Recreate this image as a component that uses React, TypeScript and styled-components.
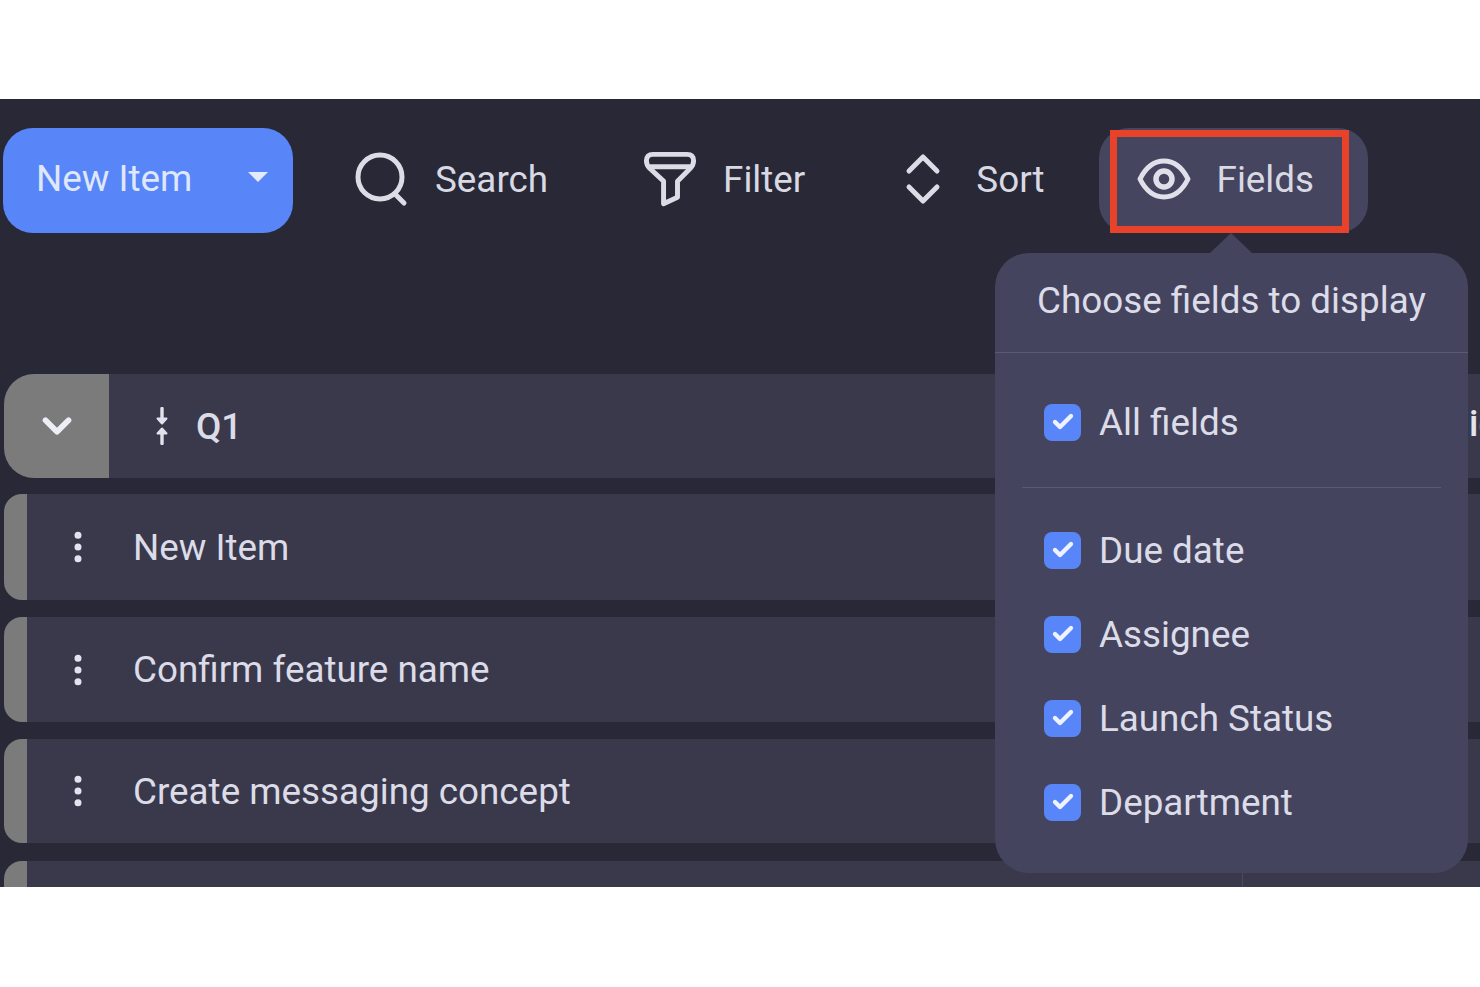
import React from 'react';
import styled, {createGlobalStyle} from 'styled-components';
import {Check, ChevronDown, MoreVertical} from 'lucide-react';

const GlobalStyle = createGlobalStyle`
  html, body {
    margin: 0;
    background: #fff;
  }
  body {
    font-family: Roboto, "Liberation Sans", sans-serif;
  }
`
const Stage = styled.main`
  position: relative;
  height: 788px;
  margin-top: 99px;
  overflow: hidden;
  background: #282836;
  color: #dcdce8;
`
const Toolbar = styled.header`
  display: flex;
  align-items: center;
  height: 105px;
  padding: 29px 0 0 3px;
`
const NewButton = styled.button`
  display: flex;
  align-items: center;
  justify-content: space-between;
  flex: none;
  box-sizing: border-box;
  width: 290px;
  height: 105px;
  padding: 0 25px 4px 33px;
  border: 0;
  border-radius: 30px;
  background: #5885f7;
  color: #dfe7fb;
  font: 36.8px Roboto, sans-serif;
`
const Caret = styled.span`
  width: 0;
  height: 0;
  margin-bottom: 4px;
  border-left: 10px solid transparent;
  border-right: 10px solid transparent;
  border-top: 10px solid #e4eafb;
`
const Tool = styled.div<{$left: number; $gap: number}>`
  display: flex;
  align-items: center;
  flex: none;
  gap: ${p => p.$gap}px;
  margin-left: ${p => p.$left}px;
  padding-bottom: 3px;
  font-size: 36.8px;
  color: #d9d9e4;
`
const FieldsTool = styled(Tool)`
  box-sizing: border-box;
  height: 105px;
  width: 269px;
  padding-left: 38px;
  border-radius: 30px;
  background: #46455f;
`
const Highlight = styled.div`
  position: absolute;
  left: 1110px;
  top: 31px;
  box-sizing: border-box;
  width: 239px;
  height: 103px;
  border: 7px solid #e8432a;
`
const Rows = styled.section`
  display: flex;
  flex-direction: column;
  margin-top: 141px;
  padding-left: 4px;
`
const Row = styled.div<{$height: number; $gap: number}>`
  display: flex;
  flex: none;
  height: ${p => p.$height}px;
  margin-bottom: ${p => p.$gap}px;
  font-size: 36.8px;
`
const Tab = styled.div<{$wide?: boolean}>`
  display: flex;
  align-items: center;
  justify-content: center;
  flex: none;
  width: ${p => (p.$wide ? 105 : 23)}px;
  border-radius: ${p => (p.$wide ? '30px 0 0 30px' : '18px 0 0 18px')};
  background: #7b7b7b;
  color: #eeeef6;
`
const RowBody = styled.div`
  display: flex;
  align-items: center;
  flex: 1;
  background: #3a394c;
`
const GroupBody = styled(RowBody)`
  gap: 26px;
  padding-left: 45px;
  font-weight: 500;
`
const Dots = styled.span`
  display: flex;
  flex: none;
  justify-content: center;
  box-sizing: border-box;
  width: 106px;
  padding-right: 4px;
  color: #e4e4f0;
`
const ClippedHead = styled.span`
  position: absolute;
  left: 1469px;
  top: 303px;
  font-size: 36.8px;
  font-weight: 500;
  color: #e4e4f0;
`
const CellLine = styled.span`
  position: absolute;
  left: 1242px;
  top: 762px;
  width: 1px;
  height: 26px;
  background: #4b4a60;
`
const Popover = styled.aside`
  position: absolute;
  left: 995px;
  top: 154px;
  width: 473px;
  height: 620px;
  border-radius: 34px;
  background: #45445f;
  &::before {
    content: '';
    position: absolute;
    right: 216px;
    top: -20px;
    border-left: 21px solid transparent;
    border-right: 21px solid transparent;
    border-bottom: 20px solid #45445f;
  }
`
const PopoverTitle = styled.h2`
  display: flex;
  align-items: center;
  box-sizing: border-box;
  height: 100px;
  margin: 0;
  padding: 0 0 4px 42px;
  border-bottom: 1px solid #5b5a75;
  font-size: 36.8px;
  font-weight: 400;
  color: #dcdce8;
`
const AllFields = styled.div`
  display: flex;
  align-items: center;
  box-sizing: border-box;
  height: 135px;
  margin: 0 27px;
  padding: 4px 0 0 22px;
  border-bottom: 1px solid #5b5a75;
`
const FieldList = styled.div`
  display: flex;
  flex-direction: column;
  gap: 48px;
  padding: 44px 0 0 49px;
`
const Field = styled.label`
  display: flex;
  align-items: center;
  gap: 18px;
  height: 36px;
  font-size: 36.8px;
  color: #dcdce8;
`
const CheckBox = styled.span`
  display: flex;
  align-items: center;
  justify-content: center;
  flex: none;
  width: 37px;
  height: 37px;
  border-radius: 8px;
  background: #5885f7;
  color: #eef2fd;
`

const SearchIcon = () => (
  <svg width="56" height="56" viewBox="0 0 56 56" fill="none" stroke="#dcdce6" strokeWidth="5" strokeLinecap="round">
    <circle cx="26" cy="26" r="22" />
    <path d="M41 43l9 9" />
  </svg>
)
const FilterIcon = () => (
  <svg width="60" height="60" viewBox="0 0 56 56" fill="none" stroke="#dcdce6" strokeWidth="4.6" strokeLinejoin="round">
    <path d="M6 11c0-4 2-6 6-6h32c4 0 6 2 6 6 0 3-1 5-3 7L35 30v15l-13 6V30L9 18c-2-2-3-4-3-7z" />
    <path d="M9 16.5h38" />
  </svg>
)
const SortIcon = () => (
  <svg width="38" height="52" viewBox="0 0 38 52" fill="none" stroke="#dcdce6" strokeWidth="5" strokeLinecap="round" strokeLinejoin="round">
    <path d="M5 18L19 4l14 14" />
    <path d="M5 34l14 14 14-14" />
  </svg>
)
const EyeIcon = () => (
  <svg width="54" height="42" viewBox="0 0 54 42" fill="none" stroke="#e0e0ea" strokeWidth="5" strokeLinejoin="round">
    <path d="M3 21C9 9 17 3 27 3s18 6 24 18c-6 12-14 18-24 18S9 33 3 21z" />
    <circle cx="27" cy="21" r="8" strokeWidth="5.5" />
  </svg>
)
const CollapseIcon = () => (
  <svg width="16" height="38" viewBox="0 0 16 38" fill="#e2e2ec" stroke="#e2e2ec" strokeWidth="3.4" strokeLinecap="round" strokeLinejoin="round">
    <path d="M8 1.5v10" />
    <path d="M3.5 11.5h9L8 16.5z" strokeWidth="2" />
    <path d="M3.5 26.5h9L8 21.5z" strokeWidth="2" />
    <path d="M8 26v10.5" />
  </svg>
)

const fields = ['Due date', 'Assignee', 'Launch Status', 'Department']
const items = [
  {name: 'New Item', height: 106, gap: 17},
  {name: 'Confirm feature name', height: 105, gap: 17},
  {name: 'Create messaging concept', height: 104, gap: 18},
  {name: '', height: 60, gap: 0},
]

const FieldBox = () => (
  <CheckBox><Check size={24} strokeWidth={4.4} /></CheckBox>
)

const App: React.FC = () => {
  return (
    <>
      <GlobalStyle />
      <Stage>
        <Toolbar>
          <NewButton>New Item<Caret /></NewButton>
          <Tool $left={61} $gap={25}><SearchIcon />Search</Tool>
          <Tool $left={92} $gap={23}><FilterIcon />Filter</Tool>
          <Tool $left={99} $gap={34}><SortIcon />Sort</Tool>
          <FieldsTool $left={54} $gap={26}><EyeIcon />Fields</FieldsTool>
        </Toolbar>
        <Highlight />
        <Rows>
          <Row $height={104} $gap={16}>
            <Tab $wide><ChevronDown size={46} strokeWidth={3} /></Tab>
            <GroupBody><CollapseIcon />Q1</GroupBody>
          </Row>
          {items.map(item => (
            <Row key={item.name || 'next'} $height={item.height} $gap={item.gap}>
              <Tab />
              <RowBody>
                {item.name && <Dots><MoreVertical size={40} strokeWidth={2.2} /></Dots>}
                {item.name}
              </RowBody>
            </Row>
          ))}
        </Rows>
        <ClippedHead>ie</ClippedHead>
        <CellLine />
        <Popover>
          <PopoverTitle>Choose fields to display</PopoverTitle>
          <AllFields>
            <Field><FieldBox />All fields</Field>
          </AllFields>
          <FieldList>
            {fields.map(f => <Field key={f}><FieldBox />{f}</Field>)}
          </FieldList>
        </Popover>
      </Stage>
    </>
  )
}

export default App;
